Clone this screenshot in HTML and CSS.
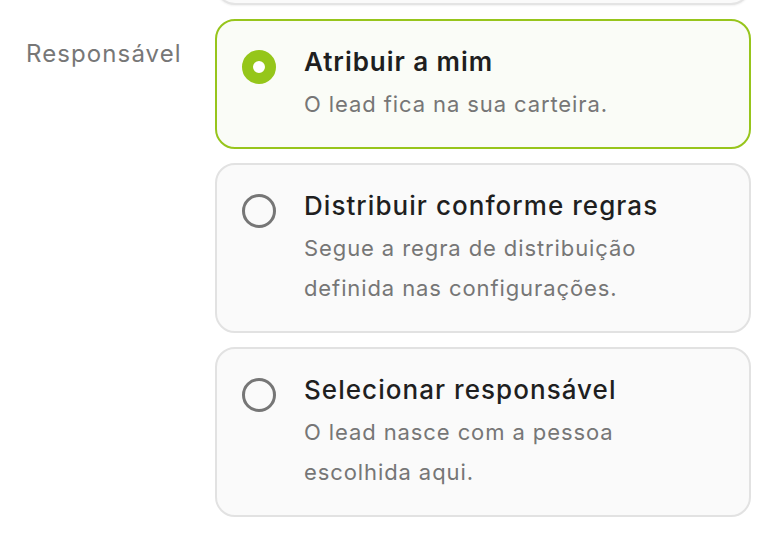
FILE: index.html
```html
<!DOCTYPE html>
<html lang="pt-BR">
<head>
<meta charset="utf-8">
<title>Responsável</title>
<link rel="stylesheet" href="styles.css">
</head>
<body>
<div class="page">
  <div class="prev-card"></div>
  <div class="field">
    <div class="field-label">Responsável</div>
    <div class="options">
      <label class="option is-selected">
        <span class="radio radio-on"></span>
        <span class="option-text">
          <span class="option-title">Atribuir a mim</span>
          <span class="option-desc">O lead fica na sua carteira.</span>
        </span>
      </label>
      <label class="option">
        <span class="radio"></span>
        <span class="option-text">
          <span class="option-title">Distribuir conforme regras</span>
          <span class="option-desc">Segue a regra de distribuição definida nas configurações.</span>
        </span>
      </label>
      <label class="option">
        <span class="radio"></span>
        <span class="option-text">
          <span class="option-title">Selecionar responsável</span>
          <span class="option-desc">O lead nasce com a pessoa escolhida aqui.</span>
        </span>
      </label>
    </div>
  </div>
</div>
</body>
</html>
```

FILE: styles.css
```css
* { box-sizing: border-box; }
html, body { margin: 0; padding: 0; background: #ffffff; }
body {
  font-family: Inter, "Noto Sans", "Liberation Sans", sans-serif;
  color: #1f1f1f;
  overflow: hidden;
}
.page {
  padding: 0 33px 0 26px;
}
.prev-card {
  margin-left: 189px;
  margin-top: -35px;
  height: 40px;
  border: 2px solid #e4e4e4;
  border-radius: 20px;
  background: #fafafa;
  box-shadow: 0 1px 2px rgba(0, 0, 0, 0.06);
}
.field {
  display: flex;
  margin-top: 14px;
}
.field-label {
  width: 189px;
  flex: none;
  padding-top: 19px;
  font-size: 24px;
  line-height: 32px;
  letter-spacing: 1.1px;
  color: #777777;
}
.options {
  width: 536px;
  display: flex;
  flex-direction: column;
  gap: 14px;
}
.option {
  display: flex;
  align-items: flex-start;
  gap: 28px;
  padding: 23px 24px 23px 25px;
  border: 2px solid #e2e2e2;
  border-radius: 20px;
  background: #fafafa;
}
.option.is-selected {
  border-color: #97c51c;
  background: #fafcf7;
}
.radio {
  flex: none;
  width: 34px;
  height: 34px;
  margin-top: 6px;
  border-radius: 50%;
  border: 3px solid #767676;
  background: transparent;
}
.radio-on {
  border: 11px solid #95c61a;
  background: #ffffff;
}
.option-text {
  display: flex;
  flex-direction: column;
}
.option-title {
  font-size: 26px;
  line-height: 36px;
  font-weight: 500;
  letter-spacing: 1.05px;
  color: #1f1f1f;
}
.is-selected .option-title {
  font-weight: 600;
  letter-spacing: 0.95px;
}
.option-desc {
  margin-top: 4px;
  max-width: 380px;
  font-size: 22px;
  line-height: 40px;
  letter-spacing: 0.9px;
  color: #767676;
}
```
